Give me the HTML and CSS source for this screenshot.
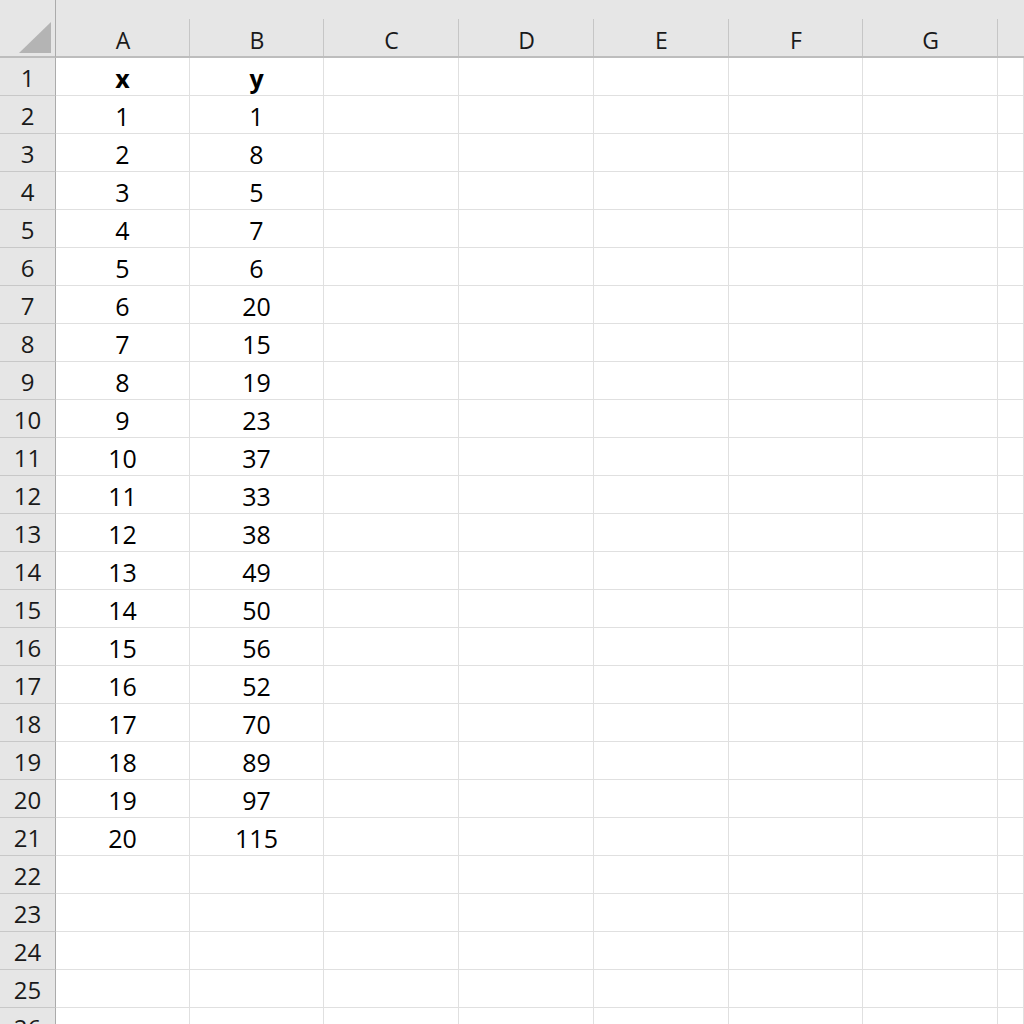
FILE: index.html
```html
<!DOCTYPE html>
<html lang="en">
<head>
  <meta charset="UTF-8" />
  <title>Sheet</title>
  <link rel="stylesheet" href="styles.css">
</head>
<body>
  <div class="sheet" id="sheet">
    <div class="corner"><span class="tri"></span></div>
    <div class="col-head">A</div>
    <div class="col-head">B</div>
    <div class="col-head">C</div>
    <div class="col-head">D</div>
    <div class="col-head">E</div>
    <div class="col-head">F</div>
    <div class="col-head">G</div>
    <div class="col-head last"></div>
  </div>

  <script>
    // x / y values for rows 1-21, rows 22-26 are empty
    const data = [
      ["x", "y"], [1, 1], [2, 8], [3, 5], [4, 7], [5, 6], [6, 20], [7, 15],
      [8, 19], [9, 23], [10, 37], [11, 33], [12, 38], [13, 49], [14, 50],
      [15, 56], [16, 52], [17, 70], [18, 89], [19, 97], [20, 115]
    ];
    const sheet = document.getElementById("sheet");

    for (let r = 1; r <= 26; r++) {
      const head = document.createElement("div");
      head.className = "row-head";
      head.textContent = r;
      sheet.appendChild(head);

      const row = data[r - 1] || [];
      for (let c = 0; c < 8; c++) {
        const cell = document.createElement("div");
        cell.className = "cell";
        if (r === 1) cell.classList.add("bold");
        if (row[c] !== undefined) cell.textContent = row[c];
        sheet.appendChild(cell);
      }
    }
  </script>
</body>
</html>
```

FILE: styles.css
```css
* {
  margin: 0;
  padding: 0;
  box-sizing: border-box;
}

body {
  background: #ffffff;
  font-family: 'Open Sans', 'Noto Sans', sans-serif;
  color: #000;
  overflow: hidden;
  height: 1024px;
}

/* Grid of the sheet */
.sheet {
  display: grid;
  grid-template-columns: 56px 134px 134px 135px 135px 135px 134px 135px 1fr;
  grid-template-rows: 58px;
  grid-auto-rows: 38px;
}

/* Top-left corner */
.corner {
  background: #e6e6e6;
  border-right: 1px solid #ababab;
  border-bottom: 2px solid #bdbdbd;
  display: flex;
  align-items: flex-end;
  justify-content: flex-end;
  padding: 0 4px 3px 0;
}

.tri {
  width: 32px;
  height: 31px;
  background: #b4b4b4;
  clip-path: polygon(100% 0, 100% 100%, 0 100%);
}

/* Column headers */
.col-head {
  background:
    linear-gradient(#c6c6c6, #c6c6c6) right bottom / 1px calc(100% - 19px) no-repeat,
    #e6e6e6;
  border-bottom: 2px solid #bdbdbd;
  display: flex;
  align-items: center;
  justify-content: center;
  padding-top: 23px;
  font-size: 23px;
  color: #1a1a1a;
}

.col-head.last {
  background: #e6e6e6;
}

/* Row headers */
.row-head {
  background: #e6e6e6;
  border-right: 1px solid #ababab;
  border-bottom: 1px solid #c8c8c8;
  display: flex;
  align-items: center;
  justify-content: center;
  padding-top: 2px;
  font-size: 24px;
  color: #1a1a1a;
}

/* Cells */
.cell {
  border-right: 1px solid #e0e0e0;
  border-bottom: 1px solid #e0e0e0;
  display: flex;
  align-items: center;
  justify-content: center;
  padding-top: 2px;
  font-size: 25px;
}

.cell.bold {
  font-weight: 700;
}
```
